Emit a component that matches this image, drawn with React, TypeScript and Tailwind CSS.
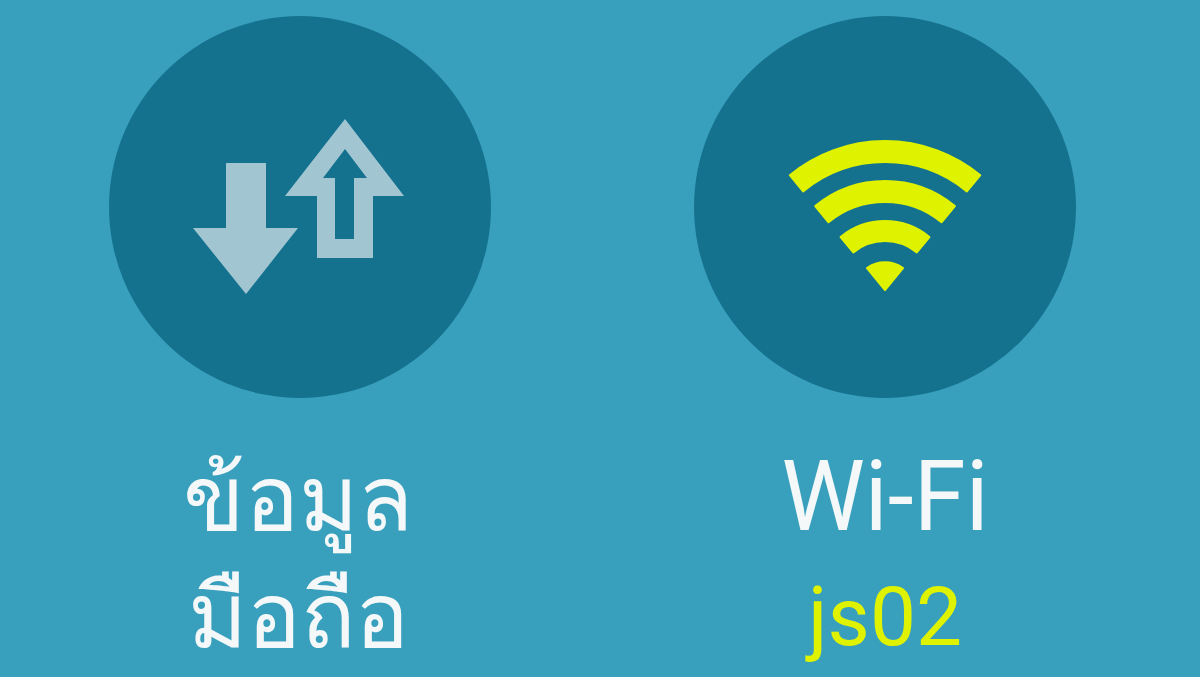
const arc = (r: number, inner: number) => {
  // ring segment around the tip of the wifi icon at (885, 291)
  const sx = 0.635;
  const cy = 0.772;
  const p = (rad: number, side: number) => `${(190 + side * rad * sx).toFixed(1)} ${(170 - rad * cy).toFixed(1)}`;
  return `M${p(r, -1)} A${r} ${r} 0 0 1 ${p(r, 1)} L${p(inner, 1)} A${inner} ${inner} 0 0 0 ${p(inner, -1)} Z`;
};

const DataIcon = () => (
  <svg width="382" height="382" viewBox="0 0 382 382" className="blur-[0.5px]">
    <path d="M117 147H157V212H189L137 278L84 212H117Z" fill="#a1c6d2" />
    <path
      fillRule="evenodd"
      d="M236 103L295 180H264V242H208V180H176ZM236 133L214 162H226V223H245V162H258Z"
      fill="#a1c6d2"
    />
  </svg>
);

const WifiIcon = () => (
  <svg width="382" height="382" viewBox="0 0 382 382" className="blur-[0.5px]">
    <g transform="translate(1 105)" fill="#dff200" stroke="#dff200" strokeWidth="2" strokeLinejoin="round">
      <path d={arc(150, 129)} />
      <path d={arc(110, 89)} />
      <path d={arc(70, 50)} />
      <path d={`M190 169L172 147A31 31 0 0 1 208 147Z`} />
    </g>
  </svg>
);

export default function App() {
  return (
    <div className="w-[1200px] h-[677px] overflow-hidden bg-[#38a0bd] flex gap-[203px] pl-[109px] pt-4">
      <div className="w-[382px] flex flex-col items-center">
        <div className="w-[382px] h-[382px] rounded-full bg-[#15728f] shrink-0">
          <DataIcon />
        </div>
        <div className="mt-[39px] pr-1 text-[#f4f8f9] text-[90px] leading-[117px] text-center blur-[0.5px] font-['Noto_Sans','Roboto','DejaVu_Sans',sans-serif]">
          <div>ข้อมูล</div>
          <div>มือถือ</div>
        </div>
      </div>
      <div className="w-[382px] flex flex-col items-center">
        <div className="w-[382px] h-[382px] rounded-full bg-[#15728f] shrink-0">
          <WifiIcon />
        </div>
        <div className="mt-[43px] text-[#f4f8f9] text-[94px] leading-[117px] origin-bottom scale-y-[1.05] blur-[0.5px] font-['Roboto',sans-serif]">Wi-Fi</div>
        <div className="mt-px text-[#dff200] text-[82px] leading-[117px] blur-[0.5px] font-['Roboto',sans-serif]">js02</div>
      </div>
    </div>
  );
}
